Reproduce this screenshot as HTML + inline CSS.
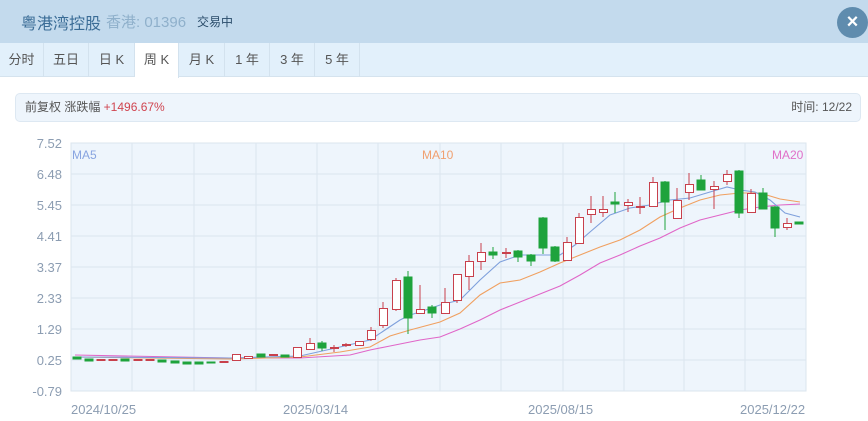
<!DOCTYPE html>
<html><head><meta charset="utf-8"><style>
*{margin:0;padding:0;box-sizing:border-box}
body{width:868px;height:421px;background:#fff;font-family:"Liberation Sans","Noto Sans CJK SC",sans-serif;position:relative;overflow:hidden}
.hd{position:absolute;left:0;top:0;width:868px;height:43px;background:#c3daed}
.hd .t{position:absolute;left:21px;top:10px;font-size:16px;color:#3a6c96}
.hd .c{position:absolute;left:106px;top:11px;font-size:15px;color:#8fb0cb}
.hd .s{position:absolute;left:197px;top:13px;font-size:12px;color:#2a4c6a}
.x{position:absolute;left:837px;top:7px;width:31px;height:31px;border-radius:50%;background:#5f8cae;color:#fff;font-size:20px;text-align:center;line-height:30px;font-weight:bold}
.tabs{position:absolute;left:0;top:43px;width:868px;height:34px;background:#e2f0fb;border-bottom:1px solid #d5e3ee}
.tab{position:absolute;top:0;height:34px;font-size:13px;color:#555;line-height:34px;text-align:center;border-right:1px solid #d3e2ee}
.tab.a{background:#fff;height:35px}
.info{position:absolute;left:15px;top:93px;width:846px;height:29px;background:#eef5fc;border:1px solid #dde8f2;border-radius:5px;font-size:12px;color:#555;line-height:27px;padding-left:9px}
.info b{font-weight:normal;color:#d04550}
.info span.r{position:absolute;right:8px;top:0}
</style></head><body>
<div class="hd"><span class="t">粤港湾控股</span><span class="c">香港: 01396</span><span class="s">交易中</span></div>
<div class="x">×</div>
<div class="tabs">
<div class="tab" style="left:0;width:44px">分时</div>
<div class="tab" style="left:44px;width:45px">五日</div>
<div class="tab" style="left:89px;width:46px">日 K</div>
<div class="tab a" style="left:135px;width:44px">周 K</div>
<div class="tab" style="left:179px;width:46px">月 K</div>
<div class="tab" style="left:225px;width:45px">1 年</div>
<div class="tab" style="left:270px;width:45px">3 年</div>
<div class="tab" style="left:315px;width:45px">5 年</div>
</div>
<div class="info">前复权 涨跌幅 <b>+1496.67%</b><span class="r">时间: 12/22</span></div>
<svg width="868" height="421" style="position:absolute;left:0;top:0" font-family="Liberation Sans, sans-serif">
<rect x="71" y="143" width="735" height="248" fill="#eef5fc" stroke="#dbe5ee"/>
<g stroke="#dbe5ee" stroke-width="1">
<line x1="71" x2="806" y1="174" y2="174"/><line x1="71" x2="806" y1="205" y2="205"/><line x1="71" x2="806" y1="236" y2="236"/><line x1="71" x2="806" y1="267" y2="267"/><line x1="71" x2="806" y1="298" y2="298"/><line x1="71" x2="806" y1="329" y2="329"/><line x1="71" x2="806" y1="360" y2="360"/>
<line x1="132" x2="132" y1="143" y2="391"/><line x1="194" x2="194" y1="143" y2="391"/><line x1="256" x2="256" y1="143" y2="391"/><line x1="317" x2="317" y1="143" y2="391"/><line x1="378" x2="378" y1="143" y2="391"/><line x1="440" x2="440" y1="143" y2="391"/><line x1="501" x2="501" y1="143" y2="391"/><line x1="563" x2="563" y1="143" y2="391"/><line x1="624" x2="624" y1="143" y2="391"/><line x1="684" x2="684" y1="143" y2="391"/><line x1="745" x2="745" y1="143" y2="391"/>
</g>
<g fill="#8c9db2" font-size="13" text-anchor="end">
<text x="62" y="148">7.52</text><text x="62" y="179">6.48</text><text x="62" y="210">5.45</text><text x="62" y="241">4.41</text><text x="62" y="272">3.37</text><text x="62" y="303">2.33</text><text x="62" y="334">1.29</text><text x="62" y="365">0.25</text><text x="62" y="396">-0.79</text>
</g>
<g fill="#8c9db2" font-size="13">
<text x="71" y="414">2024/10/25</text><text x="283" y="414">2025/03/14</text><text x="528" y="414">2025/08/15</text><text x="740" y="414">2025/12/22</text>
</g>
<text x="72" y="159" font-size="12" fill="#88a4e0">MA5</text>
<text x="422" y="159" font-size="12" fill="#f0a070">MA10</text>
<text x="772" y="159" font-size="12" fill="#e070c8">MA20</text>
<g fill="none" stroke-width="1.1">
<polyline stroke="#e066c8" points="75,355 230,358 300,358 350,355 370,350 390,346 420,340 440,337 460,329 480,320 500,310 520,302 540,294 560,286 580,275 600,263 620,255 640,246 660,238 680,228 700,220 720,215 740,210 760,207 780,205 800,204"/>
<polyline stroke="#f0a060" points="75,357 230,359 300,357 340,352 370,347 390,336 410,330 440,322 460,313 480,295 500,283 520,280 540,272 560,263 580,255 600,247 620,240 640,230 660,217 680,208 700,200 720,195 740,193 760,193 780,199 800,202"/>
<polyline stroke="#7fa0dc" points="75,357 230,358 300,356 340,347 370,340 385,330 400,320 410,315 420,312 440,305 460,300 480,280 500,262 520,255 540,255 560,255 575,245 590,232 610,215 630,208 650,205 670,200 690,198 710,192 727,187 740,190 755,192 770,200 785,213 800,217"/>
</g>
<g stroke="#1ea33c" fill="#1ea33c" stroke-width="1">
<rect x="73" y="357" width="8" height="2"/><rect x="85" y="359" width="8" height="2"/><rect x="121" y="359" width="8" height="2"/><rect x="158" y="360" width="8" height="2"/><rect x="171" y="361" width="8" height="2"/><rect x="183" y="362" width="8" height="2"/><rect x="195" y="362" width="8" height="2"/><rect x="207" y="362" width="8" height="1"/>
<rect x="257" y="354" width="8" height="3"/><rect x="281" y="355" width="8" height="2"/>
<line x1="322" x2="322" y1="341" y2="351"/><rect x="318" y="343" width="8" height="5"/>
<line x1="408" x2="408" y1="271" y2="334"/><rect x="404" y="277" width="8" height="41"/>
<line x1="432" x2="432" y1="305" y2="318"/><rect x="428" y="307" width="8" height="6"/>
<line x1="493" x2="493" y1="247" y2="259"/><rect x="489" y="252" width="8" height="3"/>
<line x1="518" x2="518" y1="250" y2="262"/><rect x="514" y="251" width="8" height="6"/>
<line x1="531" x2="531" y1="254" y2="266"/><rect x="527" y="255" width="8" height="6"/>
<line x1="543" x2="543" y1="217" y2="254"/><rect x="539" y="218" width="8" height="30"/>
<line x1="555" x2="555" y1="246" y2="262"/><rect x="551" y="247" width="8" height="14"/>
<line x1="615" x2="615" y1="192" y2="213"/><rect x="611" y="202" width="8" height="2"/>
<line x1="665" x2="665" y1="181" y2="230"/><rect x="661" y="182" width="8" height="20"/>
<line x1="701" x2="701" y1="175" y2="190"/><rect x="697" y="180" width="8" height="10"/>
<line x1="739" x2="739" y1="170" y2="218"/><rect x="735" y="171" width="8" height="42"/>
<line x1="763" x2="763" y1="188" y2="209"/><rect x="759" y="193" width="8" height="16"/>
<line x1="775" x2="775" y1="206" y2="237"/><rect x="771" y="207" width="8" height="21"/>
<rect x="795" y="222" width="8" height="2"/>
</g>
<g stroke="#c8404c" fill="#fff" stroke-width="1">
<line x1="101" x2="101" y1="359" y2="361"/><rect x="97" y="359.5" width="8" height="1"/><rect x="109" y="359.5" width="8" height="1"/><rect x="134" y="359.5" width="8" height="1"/><rect x="146" y="359.5" width="8" height="1"/><rect x="220" y="361.5" width="8" height="1"/>
<rect x="232.5" y="354.5" width="8" height="6"/><rect x="244.5" y="356.5" width="8" height="2"/><rect x="269.5" y="354.5" width="8" height="1"/>
<rect x="293.5" y="347.5" width="8" height="10"/>
<line x1="310" x2="310" y1="338" y2="343"/><rect x="306.5" y="343.5" width="8" height="6"/>
<line x1="334" x2="334" y1="345" y2="352"/><rect x="330.5" y="347.5" width="8" height="1"/>
<line x1="346" x2="346" y1="343" y2="347"/><rect x="342.5" y="344.5" width="8" height="1"/>
<rect x="355.5" y="341.5" width="8" height="4"/>
<line x1="371" x2="371" y1="327" y2="341"/><rect x="367.5" y="330.5" width="8" height="9"/>
<line x1="383" x2="383" y1="302" y2="328"/><rect x="379.5" y="308.5" width="8" height="17"/>
<line x1="396" x2="396" y1="278" y2="311"/><rect x="392.5" y="280.5" width="8" height="29"/>
<line x1="420" x2="420" y1="285" y2="313"/><rect x="416.5" y="309.5" width="8" height="4"/>
<line x1="445" x2="445" y1="288" y2="313"/><rect x="441.5" y="302.5" width="8" height="11"/>
<line x1="457" x2="457" y1="274" y2="303"/><rect x="453.5" y="274.5" width="8" height="26"/>
<line x1="469" x2="469" y1="255" y2="290"/><rect x="465.5" y="261.5" width="8" height="15"/>
<line x1="481" x2="481" y1="243" y2="270"/><rect x="477.5" y="252.5" width="8" height="9"/>
<line x1="506" x2="506" y1="248" y2="258"/><rect x="502.5" y="252.5" width="8" height="1"/>
<line x1="567" x2="567" y1="237" y2="260"/><rect x="563.5" y="242.5" width="8" height="18"/>
<line x1="579" x2="579" y1="213" y2="243"/><rect x="575.5" y="217.5" width="8" height="26"/>
<line x1="591" x2="591" y1="196" y2="223"/><rect x="587.5" y="209.5" width="8" height="5"/>
<line x1="603" x2="603" y1="196" y2="217"/><rect x="599.5" y="209.5" width="8" height="3"/>
<line x1="628" x2="628" y1="199" y2="212"/><rect x="624.5" y="202.5" width="8" height="3"/>
<line x1="640" x2="640" y1="197" y2="214"/><rect x="636.5" y="206.5" width="8" height="1"/>
<line x1="653" x2="653" y1="177" y2="206"/><rect x="649.5" y="182.5" width="8" height="24"/>
<line x1="677" x2="677" y1="188" y2="218"/><rect x="673.5" y="200.5" width="8" height="18"/>
<line x1="689" x2="689" y1="173" y2="200"/><rect x="685.5" y="184.5" width="8" height="8"/>
<line x1="714" x2="714" y1="181" y2="209"/><rect x="710.5" y="186.5" width="8" height="3"/>
<line x1="727" x2="727" y1="170" y2="185"/><rect x="723.5" y="174.5" width="8" height="7"/>
<line x1="751" x2="751" y1="189" y2="212"/><rect x="747.5" y="193.5" width="8" height="19"/>
<line x1="787" x2="787" y1="218" y2="230"/><rect x="783.5" y="223.5" width="8" height="4"/>
</g>
</svg>
</body></html>
